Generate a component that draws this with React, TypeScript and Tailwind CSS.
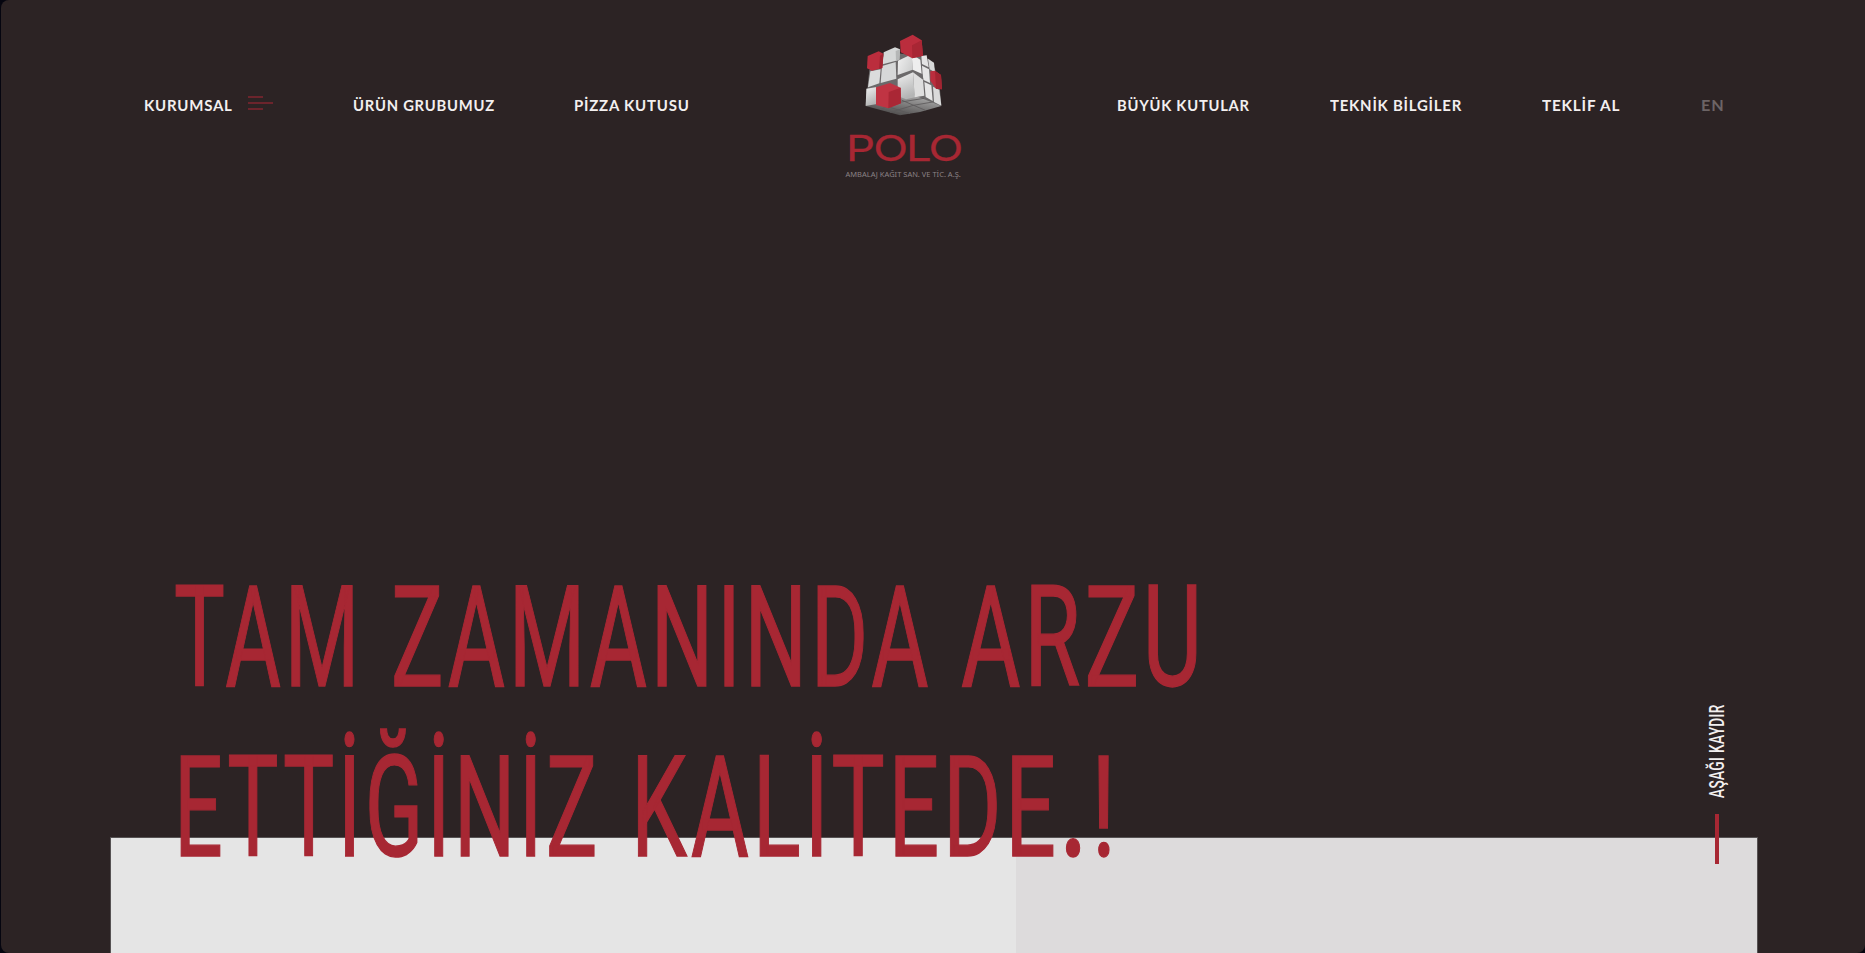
import { useLayoutEffect, useRef, useState } from "react";

type FitProps = { text: string; width: number; className?: string };

/* Scales a piece of text horizontally so that it fills a fixed width. */
function Fit({ text, width, className = "" }: FitProps) {
  const ref = useRef<HTMLSpanElement>(null);
  const [scale, setScale] = useState(1);
  useLayoutEffect(() => {
    if (ref.current) setScale(width / ref.current.offsetWidth);
  }, [text, width]);
  return (
    <span className="flex shrink-0" style={{ width }}>
      <span
        ref={ref}
        className={`block shrink-0 origin-left whitespace-nowrap ${className}`}
        style={{ transform: `scaleX(${scale})` }}
      >
        {text}
      </span>
    </span>
  );
}

const navText = "font-['Lato',sans-serif] text-[15.5px] font-bold tracking-[0.8px] leading-6";

function Cube() {
  return (
    <svg className="-ml-px block h-[84px] w-20" viewBox="99 39 240 252">
      <defs>
        <linearGradient id="white" x1="0" y1="0" x2="1" y2="0.6">
          <stop offset="0" stopColor="#f1f1f1" />
          <stop offset="1" stopColor="#cfd0d0" />
        </linearGradient>
        <linearGradient id="front" x1="0" y1="0" x2="0.3" y2="1">
          <stop offset="0" stopColor="#f0f0f0" />
          <stop offset="1" stopColor="#b4b5b5" />
        </linearGradient>
        <linearGradient id="under" x1="1" y1="0" x2="0.3" y2="1">
          <stop offset="0" stopColor="#b9b9b9" />
          <stop offset="1" stopColor="#4a4848" />
        </linearGradient>
      </defs>
      <polygon fill="#6b696a" points="118,150 160,110 205,100 280,110 300,120 316,150 330,210 334,256 210,270 107,256" />
      <polygon fill="url(#under)" points="107,258 175,235 250,225 334,258 270,276 210,286" />
      <path stroke="#5b595a" strokeWidth="2.5" fill="none" d="M150 268L214 246L282 235M180 277L250 256L308 246M214 240L286 271M180 262L240 281" />
      <polygon fill="#d6d8d8" points="161,97 195,82 210,88 208,119 198,122 158,133" />
      <polygon fill="#b5b7b7" points="197,93 210,88 208,119 198,122" />
      <polygon fill="#d6d8d8" points="156,138 197,126 199,176 152,189" />
      <polygon fill="#dbdcdc" points="121,154 152,148 148,190 114,202" />
      <polygon fill="url(#front)" points="109,206 140,201 140,252 107,258" />
      <polygon fill="#e4e4e4" points="274,108 290,106 296,142 276,132" />
      <polygon fill="#d8d8d8" points="294,116 312,128 315,157 299,148" />
      <polygon fill="#e6e6e6" points="276,137 297,148 300,189 279,179" />
      <polygon fill="#e6e6e6" points="283,186 304,196 308,243 287,231" />
      <polygon fill="#dadada" points="309,200 328,210 334,257 312,246" />
      <polygon fill="#6b696a" points="200,164 248,150 277,162 281,180 250,160 202,182" />
      <polygon fill="url(#white)" points="204,122 245,103 248,149 203,165" />
      <polygon fill="#eeeeee" points="245,103 271,119 275,161 248,149" />
      <polygon fill="url(#front)" points="203,178 249,157 254,232 228,238 203,228" />
      <polygon fill="#dedede" points="249,157 279,179 283,227 254,232" />
      <polygon fill="#bb2d3d" points="113,108 146,94 160,101 157,144 126,152 111,145" />
      <polygon fill="#a22431" points="150,107 160,101 157,144 147,147" />
      <polygon fill="#bb2d3d" points="210,63 248,44 275,61 279,107 247,115 212,97" />
      <polygon fill="#a82634" points="246,76 275,61 279,107 247,115" />
      <polygon fill="#c03443" points="138,202 180,189 212,203 213,250 175,265 138,255" />
      <polygon fill="#aa2735" points="176,216 212,203 213,250 175,265" />
      <polygon fill="#bb2d3d" points="301,154 315,152 333,165 336,208 318,206 301,182" />
      <polygon fill="#a22431" points="315,152 333,165 336,208 318,206" />
    </svg>
  );
}

function Logo() {
  return (
    <a className="ml-[148px] flex w-[130px] shrink-0 flex-col items-center pt-[33px]">
      <Cube />
      <Fit text="POLO" width={115} className="mt-[13px] font-['Inter',sans-serif] text-[36px] leading-[36px] tracking-[-1.5px] text-[#a72733] [-webkit-text-stroke:0.3px_#a72733]" />
      <Fit text="AMBALAJ KAĞIT SAN. VE TİC. A.Ş." width={115} className="mt-0.5 font-['Noto_Sans',sans-serif] text-[7.5px] leading-[12px] text-[#8b8284]" />
    </a>
  );
}

export default function App() {
  return (
    <div className="h-[953px] w-[1865px] overflow-hidden bg-[#05050f] pl-px">
      <div className="relative flex h-[953px] flex-col rounded-l-lg rounded-br-lg bg-[#2c2324] text-[#f3efef]">
        <header className="flex h-[200px] items-start">
          <nav className="flex pt-[93px] pl-[143px]">
            <Fit text="KURUMSAL" width={89} className={navText} />
            <div className="ml-[15px] flex flex-col gap-1 pt-[3px]">
              <i className="h-0.5 w-[15px] bg-[#6c242c]" />
              <i className="h-0.5 w-[25px] bg-[#6c242c]" />
              <i className="h-0.5 w-[15px] bg-[#6c242c]" />
            </div>
            <div className="w-[80px]" />
            <Fit text="ÜRÜN GRUBUMUZ" width={142} className={navText} />
            <div className="w-[79px]" />
            <Fit text="PİZZA KUTUSU" width={116} className={navText} />
          </nav>
          <Logo />
          <nav className="flex pt-[93px] pl-[149px]">
            <Fit text="BÜYÜK KUTULAR" width={133} className={navText} />
            <div className="w-[80px]" />
            <Fit text="TEKNİK BİLGİLER" width={132} className={navText} />
            <div className="w-[80px]" />
            <Fit text="TEKLİF AL" width={78} className={navText} />
            <div className="w-[81px]" />
            <Fit text="EN" width={23} className={`${navText} text-[#6c6465]`} />
          </nav>
        </header>
        <main className="flex grow flex-col justify-end pl-[109px]">
          <section className="flex h-[116px] w-[1648px] border-t border-r border-l border-[#565253]">
            <div className="w-[905px] bg-[#e5e5e5]" />
            <div className="grow bg-[#dddbdc]" />
          </section>
        </main>
        <h1 className="absolute top-[553px] left-[173px] font-['Roboto',sans-serif] text-[141px] leading-[170px] font-normal tracking-[6px] text-[#a72733] [-webkit-text-stroke:1.4px_#a72733]">
          <span className="flex">
            <Fit text="TAM" width={189} />
            <span className="w-[28px]" />
            <Fit text="ZAMANINDA" width={541} />
            <span className="w-[29px]" />
            <Fit text="ARZU" width={245} />
          </span>
          <span className="flex">
            <Fit text="ETTİĞİNİZ" width={427} />
            <span className="w-[30px]" />
            <Fit text="KALİTEDE" width={429} />
            <Fit text="." width={31} className="font-medium" />
            <Fit text="!" width={29} />
          </span>
        </h1>
        <aside className="absolute top-[704px] left-[1703px] flex h-[160px] w-[26px] flex-col items-center">
          <div className="flex h-[94px] w-[26px] rotate-180 items-center [writing-mode:vertical-rl]">
            <span className="origin-top scale-y-[0.66] font-['Roboto',sans-serif] text-[20.6px] leading-[26px] font-medium tracking-[0.6px] whitespace-nowrap">
              AŞAĞI KAYDIR
            </span>
          </div>
          <div className="mt-4 h-[50px] w-1 bg-[#a72733]" />
        </aside>
      </div>
    </div>
  );
}
